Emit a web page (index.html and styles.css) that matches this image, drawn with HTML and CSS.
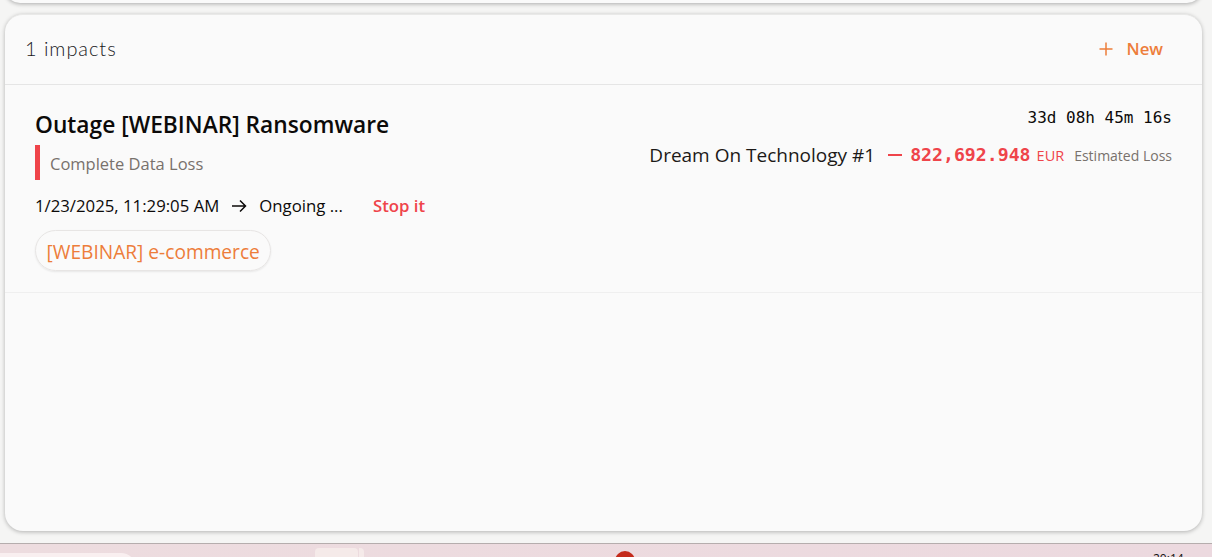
FILE: index.html
```html
<!DOCTYPE html>
<html lang="en">
<head>
<meta charset="utf-8">
<title>Impacts</title>
<link rel="stylesheet" href="styles.css">
</head>
<body>
<div class="page">
  <div class="top-card"></div>
  <main class="card">
    <header class="card-head">
      <h2 class="count">1 impacts</h2>
      <button class="new-btn" type="button">
        <svg class="plus" width="14" height="14" viewBox="0 0 14 14" aria-hidden="true"><path d="M7 0.5V13.5M0.5 7H13.5"/></svg>
        <span>New</span>
      </button>
    </header>
    <article class="impact">
      <div class="impact-left">
        <h3 class="title">Outage [WEBINAR] Ransomware</h3>
        <div class="severity">Complete Data Loss</div>
        <div class="dates">
          <span>1/23/2025, 11:29:05 AM</span>
          <svg class="arrow" width="16" height="14" viewBox="0 0 16 14" aria-hidden="true"><path d="M1 7H14.5M9 1.5L14.5 7L9 12.5"/></svg>
          <span>Ongoing ...</span>
          <a class="stop">Stop it</a>
        </div>
        <span class="chip">[WEBINAR] e-commerce</span>
      </div>
      <div class="impact-right">
        <div class="timer">33d 08h 45m 16s</div>
        <div class="loss">
          <span class="org">Dream On Technology #1</span>
          <span class="dash"></span>
          <span class="amount">822,692.948</span>
          <span class="cur">EUR</span>
          <span class="est">Estimated Loss</span>
        </div>
      </div>
    </article>
  </main>
  <footer class="taskbar">
    <div class="search"></div>
    <div class="tile"></div>
    <div class="tile-edge"></div>
    <div class="badge"></div>
    <div class="clock">20:14</div>
  </footer>
</div>
</body>
</html>
```
FILE: styles.css
```css
* { box-sizing: border-box; }
html, body { margin: 0; height: 100%; overflow: hidden; }
body { background: #f5f5f4; font-family: "Open Sans", "Noto Sans", sans-serif; color: #0c0a09; }
.page { height: 557px; display: flex; flex-direction: column; overflow: hidden; }
.top-card {
  height: 30px; flex: none; margin: -27px 10px 0 5px; background: #fafafa;
  border-radius: 18px;
  box-shadow: 0 1px 4px rgba(0,0,0,.3);
}
.card {
  height: 517px; flex: none; margin: 11px 10px 0 5px; background: #fafafa;
  border-radius: 18px;
  border-top: 1px solid #e9e9e8;
  box-shadow: 0 1px 4px rgba(0,0,0,.28);
  display: flex; flex-direction: column;
}
.card-head {
  height: 70px; flex: none; border-bottom: 1px solid #e5e5e5;
  display: flex; align-items: center; justify-content: space-between;
  padding: 0 39px 0 20px;
}
.count { margin: -4px 0 0; font: 300 20px/28px Lato, sans-serif; color: #18181b; letter-spacing: .95px; }
.new-btn {
  border: 0; background: none; padding: 0; display: flex; align-items: center; gap: 14px;
  margin-top: -2px;
  font: 600 16.8px/24px "Open Sans", sans-serif; color: #ed7d3a;
}
.plus { stroke: #ed7d3a; stroke-width: 1.5; fill: none; }
.impact {
  height: 208px; flex: none; border-bottom: 1px solid #efefef;
  display: flex; justify-content: space-between;
  padding: 19px 30px 0 30px;
}
.impact-left { display: flex; flex-direction: column; align-items: flex-start; }
.title { margin: 0; font: 600 22.75px/42px "Open Sans", sans-serif; color: #0c0a09; height: 40px; }
.severity {
  margin-top: 1px; height: 35px; border-left: 5px solid #ef444a; padding-left: 10px;
  font-size: 16.5px; line-height: 37px; color: #78716c;
}
.dates { margin-top: 9px; display: flex; align-items: center; font-size: 16.75px; line-height: 34px; height: 34px; }
.arrow { margin: 0 12px; stroke: #0c0a09; stroke-width: 1.5; fill: none; }
.stop { margin-left: 30px; font-weight: 600; color: #ef444a; }
.chip {
  margin-top: 7px; height: 41px; padding: 0 10.5px; border-radius: 21px;
  border: 1px solid #e7e5e4; box-shadow: 0 1px 2px rgba(0,0,0,.08);
  font-size: 19.15px; line-height: 42px; color: #ed7d3a; white-space: nowrap;
}
.impact-right { display: flex; flex-direction: column; align-items: flex-end; }
.timer { font: 400 16px/24px "DejaVu Sans Mono", monospace; color: #0c0a09; margin-top: 2px; }
.loss { margin-top: 9px; display: flex; align-items: center; height: 32px; white-space: nowrap; }
.org { font-size: 19px; color: #1c1917; margin-right: 2px; }
.dash { width: 14px; height: 2px; background: #ef444a; margin: 0 8px 0 11px; }
.amount { font: 700 18.2px/24px "DejaVu Sans Mono", monospace; color: #ef444a; }
.cur { margin-left: 6px; font-size: 14.5px; color: #ef444a; }
.est { margin-left: 10px; font-size: 14px; color: #78716c; }
.taskbar {
  height: 14px; flex: none; margin-top: 12px;
  border-top: 1px solid #b5adad;
  background: linear-gradient(90deg, #eddcdf, #ecd9df);
  display: flex; align-items: flex-start;
  overflow: hidden;
}
.search { width: 136px; height: 30px; margin-top: 9px; background: #f9eff0; border-radius: 0 20px 20px 0; flex: none; }
.tile { width: 43px; height: 30px; margin: 4px 0 0 179px; background: #f5eae9; border-radius: 4px 4px 0 0; flex: none; }
.tile-edge { width: 5px; height: 30px; margin-top: 4px; background: #f5eae9; border-radius: 0 4px 0 0; margin-left: 1px; flex: none; }
.badge { width: 20px; height: 20px; margin: 7px 0 0 251px; border-radius: 50%; background: #c42b1c; flex: none; }
.clock { margin: 7px 0 0 518px; font: 400 12px/16px "Open Sans", sans-serif; color: #111; flex: none; }
```
